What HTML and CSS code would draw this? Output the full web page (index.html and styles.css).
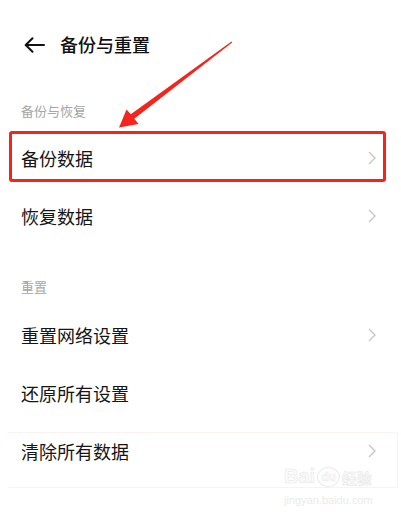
FILE: index.html
```html
<!DOCTYPE html>
<html lang="zh-CN">
<head>
<meta charset="utf-8">
<link rel="stylesheet" href="styles.css">
</head>
<body>
<div class="page">
  <header class="header">
    <svg class="back" width="21" height="16" viewBox="0 0 21 16"><path d="M20 8H2M8.5 1.2L1.7 8l6.8 6.8" fill="none" stroke="#111" stroke-width="2" stroke-linecap="round" stroke-linejoin="round"/></svg>
    <h1 class="title">备份与重置</h1>
  </header>

  <div class="label first">备份与恢复</div>
  <div class="row"><span>备份数据</span><svg class="chev" width="8" height="14" viewBox="0 0 8 14"><path d="M1 1l6 6-6 6" fill="none" stroke="#c6c6c6" stroke-width="1.4"/></svg></div>
  <div class="row"><span>恢复数据</span><svg class="chev" width="8" height="14" viewBox="0 0 8 14"><path d="M1 1l6 6-6 6" fill="none" stroke="#c6c6c6" stroke-width="1.4"/></svg></div>

  <div class="label second">重置</div>
  <div class="row"><span>重置网络设置</span><svg class="chev" width="8" height="14" viewBox="0 0 8 14"><path d="M1 1l6 6-6 6" fill="none" stroke="#c6c6c6" stroke-width="1.4"/></svg></div>
  <div class="row"><span>还原所有设置</span></div>
  <div class="row"><span>清除所有数据</span><svg class="chev" width="8" height="14" viewBox="0 0 8 14"><path d="M1 1l6 6-6 6" fill="none" stroke="#c6c6c6" stroke-width="1.4"/></svg></div>

  <div class="highlight"></div>
  <div class="faintbox"></div>
  <svg class="arrow" width="401" height="140" viewBox="0 0 401 140"><polygon points="119,127.5 126.5,109.5 130.8,114.2 231.5,41.5 232.2,42.5 134.3,118.7 138.5,124" fill="#f4251c"/></svg>

  <div class="watermark">
    <div class="wm-logo"><span class="wm-bai">Bai</span><span class="wm-du">du</span><span class="wm-jy">经验</span></div>
    <div class="wm-url">jingyan.baidu.com</div>
  </div>
</div>
</body>
</html>
```

FILE: styles.css
```css
html, body {
  margin: 0;
  padding: 0;
  background: #ffffff;
}

body {
  font-family: "Noto Sans CJK SC", "Noto Sans", sans-serif;
  color: #111111;
}

.page {
  position: relative;
  width: 401px;
  height: 515px;
  overflow: hidden;
}

.header {
  display: flex;
  align-items: center;
  height: 88px;
  padding-left: 24px;
  box-sizing: border-box;
}

.back {
  margin-right: 15px;
  margin-top: 2px;
}

.title {
  margin: 0;
  font-size: 18px;
  font-weight: 500;
  line-height: 24px;
  color: #111111;
}

.label {
  padding-left: 21px;
  font-size: 13px;
  line-height: 18px;
  color: #a6a6a6;
}

.label.first {
  padding-top: 14px;
  padding-bottom: 9px;
}

.label.second {
  padding-top: 33px;
  padding-bottom: 10px;
}

.row {
  display: flex;
  align-items: center;
  justify-content: space-between;
  height: 58px;
  padding: 0 25px 0 21px;
  font-size: 18px;
  color: #151515;
}

.chev {
  display: block;
}

.highlight {
  position: absolute;
  left: 9px;
  top: 131px;
  width: 371px;
  height: 45px;
  border: 3px solid #f5231b;
  border-radius: 3px;
}

.faintbox {
  position: absolute;
  left: 8px;
  top: 432px;
  width: 388px;
  height: 54px;
  border: 1px solid #fcf1f1;
  border-left-color: transparent;
}

.arrow {
  position: absolute;
  left: 0;
  top: 0;
}

.watermark {
  position: absolute;
  left: 284px;
  top: 460px;
  width: 92px;
  color: #f0f0f0;
  font-family: "Liberation Sans", sans-serif;
}

.wm-logo {
  display: flex;
  align-items: flex-end;
  font-size: 20px;
  font-weight: bold;
  line-height: 32px;
  -webkit-text-stroke: 0.5px #e6e6e6;
  color: #fbfbfb;
}

.wm-du {
  font-size: 12px;
  line-height: 18px;
  margin: 0 2px 5px 2px;
  padding: 0 3px;
  border: 1.5px solid #ebebeb;
  border-radius: 50%;
  -webkit-text-stroke: 0.4px #e6e6e6;
}

.wm-jy {
  font-family: "Noto Sans CJK SC", sans-serif;
  font-size: 15px;
  line-height: 28px;
}

.wm-url {
  font-size: 11px;
  line-height: 14px;
  color: #ebebeb;
  margin-top: 1px;
}
```
